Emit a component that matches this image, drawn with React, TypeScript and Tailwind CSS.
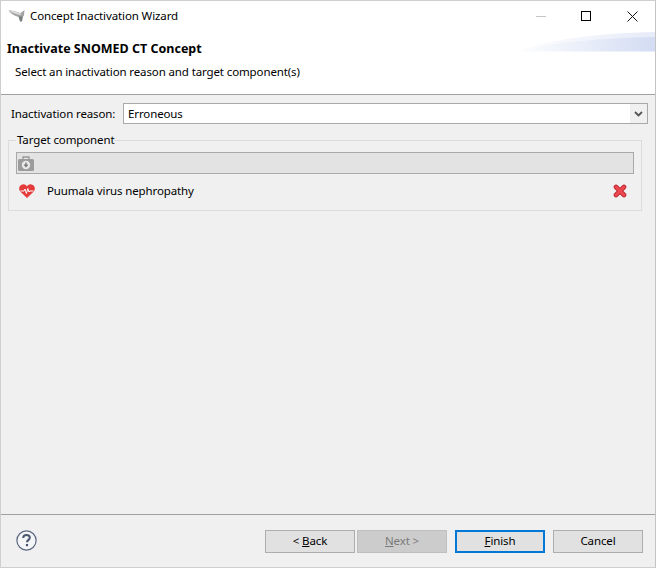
import React from 'react';

const WizardButton: React.FC<{
  label: React.ReactNode;
  className?: string;
  disabled?: boolean;
  focused?: boolean;
}> = ({ label, className = '', disabled, focused }) => (
  <button
    disabled={disabled}
    className={`w-[90px] h-[23px] flex items-center justify-center pb-px ${
      focused ? 'border-2 border-[#0078d7] bg-[#e1e1e1] text-black' : disabled
        ? 'border bg-[#cccccc] border-[#bfbfbf] text-[#7a7a7a]'
        : 'border bg-[#e1e1e1] border-[#adadad] text-black'
    } ${className}`}
  >
    <span>{label}</span>
  </button>
);

const BirdIcon = () => (
  <svg width="18" height="14" viewBox="0 0 18 14">
    <path d="M0.5 1.5 C5 1 9 3 12.5 4 L16.5 1 L16 6.5 C14.5 9 12 8.5 9 7.5 C6 6.5 2.5 4.5 0.5 1.5Z" fill="#a3a3a3" />
    <path d="M1 1.5 C5 1.5 9 3.2 13 4.6 L13 6 C9 5.5 4.5 4 1 1.5Z" fill="#dcdcdc" />
    <path d="M10.5 7.5 L15 7.5 L14 12.5 L12 12.5Z" fill="#78807b" />
  </svg>
);

const CameraIcon = () => (
  <svg width="16" height="15" viewBox="0 0 16 15">
    <path d="M5 3 V1 H11 V3" fill="none" stroke="#9a9a9a" strokeWidth="1.4" />
    <rect x="0" y="3" width="16" height="12" rx="1.5" fill="#9c9c9c" />
    <circle cx="8" cy="9" r="4.2" fill="#e9e9e9" />
    <path d="M8 6.5 V10 M6.3 8.6 L8 10.5 L9.7 8.6" fill="none" stroke="#777777" strokeWidth="1.3" />
  </svg>
);

const HeartIcon = () => (
  <svg width="16" height="14" viewBox="0 0 16 14">
    <path d="M8 14 L1.2 7.5 C-0.8 5 0 1 3.6 0.4 C5.6 0.1 7 1 8 2.4 C9 1 10.4 0.1 12.4 0.4 C16 1 16.8 5 14.8 7.5Z" fill="#e53b3b" />
    <path d="M1.5 7 H5 L6 5 L7.4 9.5 L8.8 4.5 L10 8 L10.8 7 H14.5" fill="none" stroke="#ffffff" strokeWidth="1" />
  </svg>
);

const RemoveIcon = () => (
  <svg width="14" height="14" viewBox="0 0 14 14">
    <path d="M3 3 L11 11 M11 3 L3 11" stroke="#b8242f" strokeWidth="4.6" strokeLinecap="round" />
    <path d="M3 3 L11 11 M11 3 L3 11" stroke="#ee4850" strokeWidth="3" strokeLinecap="round" />
  </svg>
);

const HelpIcon = () => (
  <svg width="21" height="21" viewBox="0 0 21 21">
    <circle cx="10.5" cy="10.5" r="9.6" fill="#f4f5f7" stroke="#5b6680" strokeWidth="1.2" />
    <path
      d="M7.2 8 C7.2 5.9 8.7 5 10.5 5 C12.4 5 13.8 6 13.8 7.7 C13.8 9.8 11 10 11 12.3"
      fill="none"
      stroke="#4a5570"
      strokeWidth="2"
    />
    <rect x="9.9" y="14" width="2.2" height="2.2" fill="#4a5570" />
  </svg>
);

const App: React.FC = () => {
  return (
    <div className="w-[656px] h-[568px] flex flex-col bg-[#f0f0f0] border border-[#cfcfcf] border-r-[#c4c4c4] text-[11.5px] tracking-[-0.12px] text-black font-['Noto_Sans','Open_Sans',sans-serif] overflow-hidden">
      {/* header */}
      <div className="h-[93px] bg-white border-b border-[#a0a0a0] flex flex-col shrink-0 box-content">
        <div className="h-[30px] flex items-center shrink-0">
          <div className="ml-[7px] w-[18px] flex justify-center">
            <BirdIcon />
          </div>
          <span className="ml-[4px]">Concept Inactivation Wizard</span>
          <div className="ml-auto flex items-center">
            <div className="w-[45px] h-[30px] flex items-center justify-center">
              <div className="w-[10px] h-px bg-[#c4c4c4]" />
            </div>
            <div className="w-[46px] h-[30px] flex items-center justify-center">
              <div className="w-[10px] h-[10px] border border-black" />
            </div>
            <div className="w-[46px] h-[30px] flex items-center justify-center">
              <svg width="11" height="11" viewBox="0 0 11 11">
                <path d="M0.5 0.5 L10.5 10.5 M10.5 0.5 L0.5 10.5" stroke="#111" strokeWidth="1" />
              </svg>
            </div>
          </div>
        </div>
        <div className="relative flex-1 pl-[6px]">
          <svg className="absolute right-0 top-0" width="141" height="21" viewBox="0 0 141 21">
            <defs>
              <linearGradient id="banner" x1="0" x2="1" y1="0" y2="0">
                <stop offset="0" stopColor="#ffffff" />
                <stop offset="1" stopColor="#d3dcf3" />
              </linearGradient>
              <linearGradient id="bannerTop" x1="0" x2="1" y1="0" y2="0">
                <stop offset="0" stopColor="#ffffff" />
                <stop offset="1" stopColor="#e6ebf8" />
              </linearGradient>
            </defs>
            <path d="M0 20.5 C30 10 80 2 141 1 V7 C90 8 40 12 20 20.5Z" fill="url(#bannerTop)" />
            <path d="M0 20.5 C30 13 80 7 141 6 V20.5Z" fill="url(#banner)" />
          </svg>
          <div className="relative mt-[9px] font-bold text-[12.5px] tracking-normal leading-[18px]">Inactivate SNOMED CT Concept</div>
          <div className="relative mt-[6px] ml-[8px] leading-[16px]">Select an inactivation reason and target component(s)</div>
        </div>
      </div>

      {/* body */}
      <div className="flex-1 flex flex-col">
        <div className="flex items-center mt-[8px] ml-[10px] mr-[7px] h-[21px]">
          <span className="w-[112px] shrink-0">Inactivation reason:</span>
          <div className="flex-1 h-[21px] bg-white border border-[#a9a9a9] flex items-center pl-[4px]">
            <span>Erroneous</span>
            <div className="ml-auto w-[17px] h-[19px] bg-[#f0f0f0] flex items-center justify-center">
              <svg width="9" height="6" viewBox="0 0 9 6">
                <path d="M1 1 L4.5 4.5 L8 1" fill="none" stroke="#555" strokeWidth="1.8" />
              </svg>
            </div>
          </div>
        </div>

        <fieldset className="mt-[8px] ml-[7px] w-[634px] h-[79px] border border-[#dcdcdc] px-[7px]">
          <legend className="px-[1px] leading-[16px]">Target component</legend>
          <div className="mt-[4px] h-[22px] bg-[#e3e3e3] border border-[#a9a9a9] flex items-center pl-[1px] w-[618px]">
            <CameraIcon />
          </div>
          <div className="flex items-center h-[16px] mt-[9px] pl-[3px]">
            <HeartIcon />
            <span className="ml-[12px]">Puumala virus nephropathy</span>
            <div className="ml-auto mr-[7px]">
              <RemoveIcon />
            </div>
          </div>
        </fieldset>
      </div>

      {/* footer */}
      <div className="h-[52px] shrink-0 border-t border-[#a0a0a0] flex items-start box-content">
        <div className="ml-[15px] mt-[15px]">
          <HelpIcon />
        </div>
        <div className="ml-auto mr-[12px] mt-[15px] flex">
          <WizardButton label={<>&lt; <span className="underline">B</span>ack</>} />
          <WizardButton className="ml-[2px]" disabled label={<><span className="underline">N</span>ext &gt;</>} />
          <WizardButton className="ml-[8px]" focused label={<><span className="underline">F</span>inish</>} />
          <WizardButton className="ml-[8px]" label="Cancel" />
        </div>
      </div>
    </div>
  );
};

export default App;
